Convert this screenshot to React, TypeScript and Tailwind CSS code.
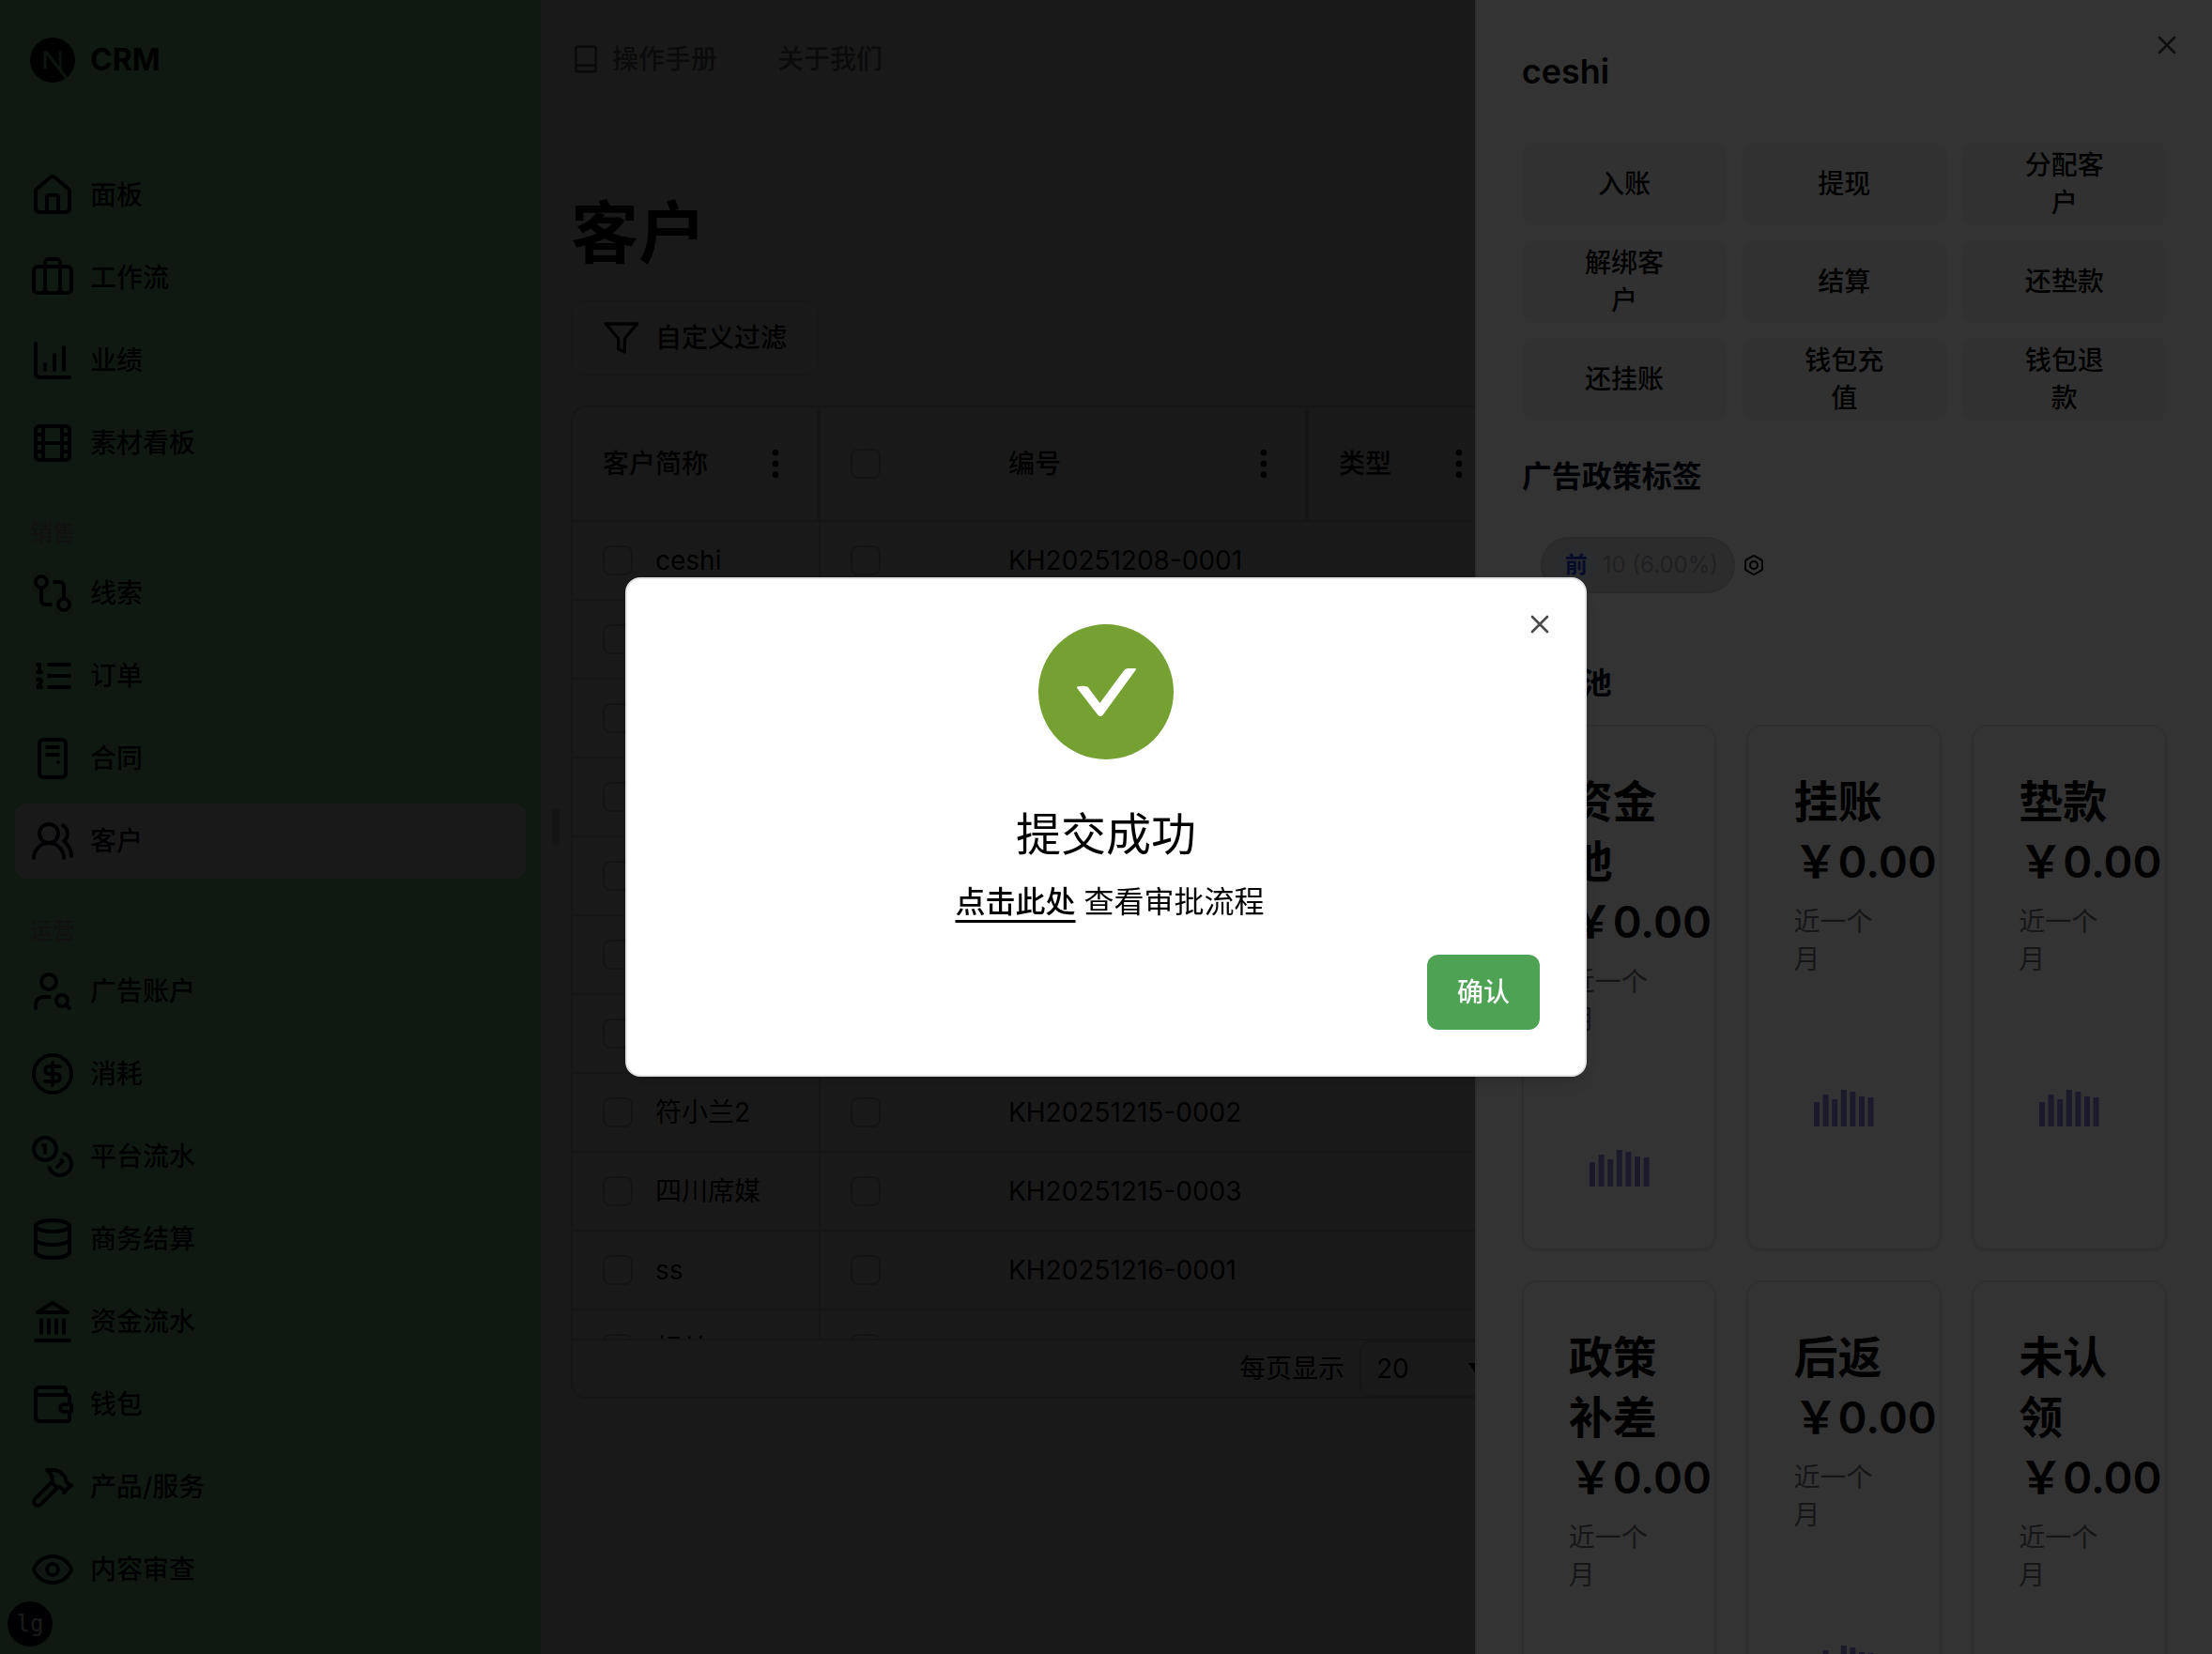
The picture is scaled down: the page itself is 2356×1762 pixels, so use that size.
import React from 'react';
import {
  Bolt,
  Briefcase,
  ChartColumnIncreasing,
  CircleDollarSign,
  Database,
  EllipsisVertical,
  Eye,
  Film,
  GitCompare,
  Hammer,
  House,
  PcCase,
  UserSearch,
  UsersRound,
  Wallet,
  X,
} from 'lucide-react';

type IconType = React.ComponentType<{ className?: string }>;

interface NavItem {
  label: string;
  icon: IconType;
  active?: boolean;
}

interface NavGroup {
  title?: string;
  items: NavItem[];
}

interface Customer {
  id: number;
  name?: string;
  code?: string;
}

// --- ICONS ---
const StrokeIcon = ({ className, children }: { className?: string; children: React.ReactNode }) => (
  <svg
    viewBox="0 0 24 24"
    fill="none"
    stroke="currentColor"
    strokeWidth={2}
    strokeLinecap="round"
    strokeLinejoin="round"
    aria-hidden="true"
    className={className}
  >
    {children}
  </svg>
);

const ListIcon = ({ className }: { className?: string }) => (
  <StrokeIcon className={className}>
    <path d="M10 6h11M10 12h11M10 18h11M4 6h1v4M4 10h2M6 18H4c0-1 2-2 2-3s-1-1.5-2-1" />
  </StrokeIcon>
);

const CoinsIcon = ({ className }: { className?: string }) => (
  <StrokeIcon className={className}>
    <circle cx="8" cy="8" r="6" />
    <path d="M18.09 10.37A6 6 0 1 1 10.34 18M7 6h1v4" />
    <path d="m16.71 13.88.7.71-2.82 2.82" />
  </StrokeIcon>
);

const BankIcon = ({ className }: { className?: string }) => (
  <StrokeIcon className={className}>
    <path d="M3 22h18M6 18v-7M10 18v-7M14 18v-7M18 18v-7" />
    <path d="m12 2 8 5H4z" />
  </StrokeIcon>
);

const FunnelIcon = ({ className }: { className?: string }) => (
  <StrokeIcon className={className}>
    <path d="M22 3H2l8 9.46V19l4 2v-8.54z" />
  </StrokeIcon>
);

const ManualIcon = ({ className }: { className?: string }) => (
  <StrokeIcon className={className}>
    <rect x="4" y="2" width="16" height="20" rx="2" />
    <path d="M4 17h16" />
  </StrokeIcon>
);

const Logo = () => (
  <svg viewBox="0 0 180 180" className="size-12" aria-hidden="true">
    <circle cx="90" cy="90" r="90" fill="#000" />
    <path
      d="M149.5 157.5 69.1 54H54v72h12.1V69.4l73.9 95.5c3.3-2.2 6.5-4.7 9.5-7.4z"
      fill="#a0ffb0"
      fillOpacity="0.8"
    />
    <path d="M115 54h12v72h-12z" fill="#a0ffb0" fillOpacity="0.6" />
  </svg>
);

// --- DATA ---
const navGroups: NavGroup[] = [
  {
    items: [
      { label: '面板', icon: House },
      { label: '工作流', icon: Briefcase },
      { label: '业绩', icon: ChartColumnIncreasing },
      { label: '素材看板', icon: Film },
    ],
  },
  {
    title: '销售',
    items: [
      { label: '线索', icon: GitCompare },
      { label: '订单', icon: ListIcon },
      { label: '合同', icon: PcCase },
      { label: '客户', icon: UsersRound, active: true },
    ],
  },
  {
    title: '运营',
    items: [
      { label: '广告账户', icon: UserSearch },
      { label: '消耗', icon: CircleDollarSign },
      { label: '平台流水', icon: CoinsIcon },
      { label: '商务结算', icon: Database },
      { label: '资金流水', icon: BankIcon },
      { label: '钱包', icon: Wallet },
      { label: '产品/服务', icon: Hammer },
      { label: '内容审查', icon: Eye },
    ],
  },
];

const customers: Customer[] = [
  { id: 1, name: 'ceshi', code: 'KH20251208-0001' },
  { id: 2 },
  { id: 3 },
  { id: 4 },
  { id: 5 },
  { id: 6 },
  { id: 7 },
  { id: 8, name: '符小兰2', code: 'KH20251215-0002' },
  { id: 9, name: '四川席媒', code: 'KH20251215-0003' },
  { id: 10, name: 'ss', code: 'KH20251216-0001' },
  { id: 11, name: '相关', code: 'KH20251216-0002' },
];

const actions = ['入账', '提现', '分配客户', '解绑客户', '结算', '还垫款', '还挂账', '钱包充值', '钱包退款'];

const pools = ['资金池', '挂账', '垫款', '政策补差', '后返', '未认领'];

const bars = [26, 34, 29, 39, 37, 32, 31];

// --- SIDEBAR ---
const Sidebar = () => (
  <aside className="w-[576px] shrink-0 bg-[#a0ffb0] text-[#020817]">
    <a href="#" className="flex h-32 items-center gap-4 px-8 text-black">
      <Logo />
      <span className="text-[32px] font-bold">CRM</span>
    </a>
    <nav className="px-4 pt-10">
      {navGroups.map((group, index) => (
        <div key={index}>
          {group.title && (
            <h2 className="mt-8 h-12 px-4 text-2xl/[48px] font-medium text-[#b8a0b0]">{group.title}</h2>
          )}
          <ul className="flex flex-col gap-2">
            {group.items.map(({ label, icon: Icon, active }) => (
              <li key={label}>
                <a
                  href="#"
                  className={`flex h-20 items-center gap-4 rounded-xl px-4 text-[28px] font-medium ${
                    active ? 'bg-white' : ''
                  }`}
                >
                  <Icon className="size-12" />
                  {label}
                </a>
              </li>
            ))}
          </ul>
        </div>
      ))}
    </nav>
  </aside>
);

// --- TABLE ---
const Checkbox = ({ label }: { label: string }) => (
  <input
    type="checkbox"
    aria-label={label}
    className="block size-8 shrink-0 appearance-none rounded-lg border-2 border-[#c4c4c8]"
  />
);

const HeadCell = ({ label }: { label: string }) => (
  <div className="flex items-center justify-between pl-8 pr-6">
    {label}
    <button type="button" aria-label={`${label}菜单`}>
      <EllipsisVertical className="size-10" />
    </button>
  </div>
);

const CustomersTable = () => (
  <section className="mt-8 overflow-hidden rounded-2xl border-2 border-[#d8d8dc]">
    <div className="h-[992px] overflow-hidden">
      <table className="w-full table-fixed border-separate border-spacing-0 text-left text-[28px]">
        <colgroup>
          <col className="w-[264px]" />
          <col className="w-[168px]" />
          <col className="w-[352px]" />
          <col className="w-[208px]" />
          <col />
        </colgroup>
        <thead>
          <tr className="h-[122px]">
            <th className="border-b-2 border-r-4 border-[#d8d8dc] font-medium">
              <HeadCell label="客户简称" />
            </th>
            <th className="border-b-2 border-[#d8d8dc] pl-8">
              <Checkbox label="全选" />
            </th>
            <th className="border-b-2 border-r-4 border-[#d8d8dc] font-medium">
              <HeadCell label="编号" />
            </th>
            <th className="border-b-2 border-r-4 border-[#d8d8dc] font-medium">
              <HeadCell label="类型" />
            </th>
            <th className="border-b-2 border-[#d8d8dc]" />
          </tr>
        </thead>
        <tbody>
          {customers.map((item) => (
            <tr key={item.id} className="h-[84px]">
              <td className="border-b-2 border-r-2 border-[#d8d8dc] pl-8">
                <div className="flex items-center gap-6">
                  <Checkbox label="选择客户" />
                  {item.name}
                </div>
              </td>
              <td className="border-b-2 border-[#d8d8dc] pl-8">
                <Checkbox label="选择行" />
              </td>
              <td className="border-b-2 border-[#d8d8dc] pl-8">{item.code}</td>
              <td className="border-b-2 border-[#d8d8dc]" />
              <td className="border-b-2 border-[#d8d8dc]" />
            </tr>
          ))}
        </tbody>
      </table>
    </div>
    <div className="flex h-[62px] items-center justify-center gap-4 border-t-2 border-[#d8d8dc] text-[28px]">
      <label htmlFor="page-size">每页显示</label>
      <div className="relative h-full w-[164px]">
        <select
          id="page-size"
          defaultValue="20"
          className="h-full w-full appearance-none rounded-xl border-2 border-[#d8d8dc] px-4"
        >
          <option value="20">20</option>
        </select>
        <svg viewBox="0 0 16 12" className="pointer-events-none absolute right-8 top-6 h-3 w-4" aria-hidden="true">
          <path d="M0 0h16L8 12z" />
        </svg>
      </div>
    </div>
  </section>
);

const MainContent = () => (
  <main className="min-w-0 flex-1 bg-white">
    <header className="flex h-32 items-center gap-16 border-b-2 border-[#ededef] pl-8 text-[28px] font-medium text-[#71717a]">
      <a href="#" className="flex items-center gap-3">
        <ManualIcon className="size-8" />
        操作手册
      </a>
      <a href="#">关于我们</a>
    </header>
    <div className="px-8 pt-20">
      <h1 className="text-[72px]/[80px] font-bold">客户</h1>
      <button
        type="button"
        className="mt-8 flex h-20 items-center gap-4 rounded-xl border-2 border-[#ececee] px-8 text-[28px] font-medium"
      >
        <FunnelIcon className="size-10" />
        自定义过滤
      </button>
      <CustomersTable />
    </div>
  </main>
);

// --- CUSTOMER PANEL ---
const PoolCard = ({ label }: { label: string }) => (
  <article className="h-[560px] rounded-2xl border-2 border-[#e4e4e7] p-12 shadow-sm">
    <h4 className="text-[47px]/[64px] font-semibold">
      {label}
      <span className="block whitespace-nowrap">￥0.00</span>
    </h4>
    <p className="mt-3 text-[28px]/[40px] text-[#71717a]">近一个月</p>
    <svg viewBox="0 0 64 158" className="mx-auto h-[158px] w-16" aria-label={`${label}趋势`}>
      {bars.map((value, i) => (
        <rect key={i} x={i * 9.6} y={158 - value} width={6} height={value} fill="#8884d8" />
      ))}
    </svg>
  </article>
);

const CustomerPanel = () => (
  <aside className="fixed inset-y-0 right-0 w-1/3 overflow-hidden border-l-2 border-[#e4e4e7] bg-white px-12 pt-12">
    <button type="button" aria-label="关闭面板" className="absolute right-8 top-8 opacity-70">
      <X className="size-8" />
    </button>
    <h2 className="text-4xl/[56px] font-semibold">ceshi</h2>
    <div className="mt-12 grid grid-cols-3 gap-4">
      {actions.map((label) => (
        <button
          key={label}
          type="button"
          className="h-[88px] rounded-xl bg-[#f5f5f5] px-16 text-[28px]/[40px] font-medium"
        >
          {label}
        </button>
      ))}
    </div>
    <h3 className="mt-9 text-[32px]/[48px] font-semibold text-[#020817]">广告政策标签</h3>
    <div className="mt-10 flex items-center gap-2 pl-5">
      <span className="flex h-[60px] items-center gap-2 rounded-full border-2 border-[#cfcfd1] bg-[#dcdcdc] px-4 text-2xl text-[#9aa0aa]">
        <span className="flex size-10 items-center justify-center rounded-full border-2 border-[#c9d9ee] bg-[#d3d9e1] font-bold text-[#1e3acb]">
          前
        </span>
        10 (6.00%)
      </span>
      <button type="button" aria-label="设置标签">
        <Bolt className="size-6" />
      </button>
    </div>
    <h3 className="mt-[72px] text-[32px]/[48px] font-semibold text-[#020817]">资金池</h3>
    <div className="mt-5 grid grid-cols-3 gap-8">
      {pools.map((label) => (
        <PoolCard key={label} label={label} />
      ))}
    </div>
  </aside>
);

// --- SUCCESS DIALOG ---
const SuccessDialog = () => (
  <div className="fixed inset-0 flex items-center justify-center bg-black/80">
    <div
      role="dialog"
      aria-labelledby="dialog-title"
      className="relative w-full max-w-5xl rounded-2xl border-2 border-[#e4e4e7] bg-white p-12 shadow-lg"
    >
      <button type="button" aria-label="关闭" className="absolute right-8 top-8 opacity-70">
        <X className="size-8" />
      </button>
      <div className="flex flex-col items-center">
        <svg viewBox="0 0 144 144" className="size-36" aria-hidden="true">
          <circle cx="72" cy="72" r="72" fill="#75a133" />
          <path
            d="M42 67.500q4-1.500 10 0l13.500 18L91 51q2-3 5-3h7L68 96q-2 2-4 0z"
            fill="#fff"
            stroke="#fff"
            strokeWidth={2}
            strokeLinejoin="round"
          />
        </svg>
        <h2 id="dialog-title" className="mt-12 text-5xl/[64px]">
          提交成功
        </h2>
        <p className="mt-4 text-[32px]/[48px]">
          <a href="#" className="ml-2 font-medium underline decoration-[3px] underline-offset-8">
            点击此处
          </a>{' '}
          查看审批流程
        </p>
      </div>
      <div className="mt-8 flex justify-end">
        <button type="button" className="h-20 rounded-xl bg-[#4ea254] px-8 text-[28px] font-medium text-[#fafafa]">
          确认
        </button>
      </div>
    </div>
  </div>
);

export default function App() {
  return (
    <div className="flex h-screen overflow-hidden bg-white font-['Inter','Noto_Sans_CJK_SC',sans-serif] text-black">
      <Sidebar />
      <MainContent />
      <div className="fixed left-[588px] top-1/2 h-10 w-2 -translate-y-1/2 rounded-full bg-[#c9c9c9]" />
      <div className="fixed bottom-2 left-2 flex size-12 items-center justify-center rounded-full bg-[#020817] font-['DejaVu_Sans_Mono',monospace] text-2xl text-white">
        lg
      </div>
      <div className="fixed inset-0 bg-black/50" />
      <CustomerPanel />
      <SuccessDialog />
    </div>
  );
}
